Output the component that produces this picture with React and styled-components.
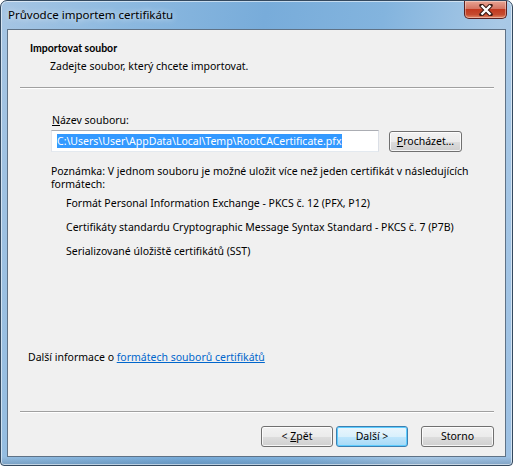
import React from 'react';
import styled, { createGlobalStyle } from 'styled-components';

const GlobalStyle = createGlobalStyle`
  html, body {
    margin: 0;
    padding: 0;
    background: #ffffff;
  }
  body {
    font-family: "Noto Sans", "Open Sans", sans-serif;
    font-size: 10.5px;
    color: #000;
  }
`;

// Aero glass frame
const Window = styled.div`
  width: 513px;
  height: 466px;
  box-sizing: border-box;
  display: flex;
  flex-direction: column;
  border: 1px solid #34495f;
  border-radius: 7px 7px 4px 4px;
  overflow: hidden;
  background:
    linear-gradient(to top, rgba(40, 70, 100, 0.25) 0px, rgba(40, 70, 100, 0) 8px),
    linear-gradient(
      100deg,
      #a6c5e3 0%,
      #8ebae0 20%,
      #78acda 45%,
      #83b4de 65%,
      #a9c9e6 85%,
      #9cc0e3 100%
    );
  box-shadow: inset 0 0 0 1px rgba(255, 255, 255, 0.55);
`;

const TitleBar = styled.div`
  height: 28px;
  display: flex;
  align-items: flex-start;
  justify-content: space-between;
  padding-left: 7px;
`;

const Caption = styled.span`
  margin-top: 6px;
  font-size: 11.5px;
  color: #000;
  text-shadow: 0 0 6px rgba(255, 255, 255, 0.9);
`;

const CloseButton = styled.div`
  width: 43px;
  height: 18px;
  margin-right: 5px;
  box-sizing: border-box;
  border: 1px solid #5a2020;
  border-top: none;
  border-radius: 0 0 5px 5px;
  background: linear-gradient(
    to bottom,
    #e8a493 0%,
    #d47563 45%,
    #c2391f 50%,
    #c54b2f 80%,
    #e48a6a 100%
  );
  box-shadow: inset 0 0 0 1px rgba(255, 255, 255, 0.35);
  display: flex;
  align-items: center;
  justify-content: center;
`;

const Client = styled.div`
  flex: 1;
  margin: 0 6px 8px 6px;
  border: 1px solid #5f7286;
  background: #f0f0f0;
  display: flex;
  flex-direction: column;
`;

const Header = styled.div`
  padding: 11px 0 0 22px;
  height: 46px;
`;

const HeaderTitle = styled.div`
  font-family: Lato, "Noto Sans", sans-serif;
  font-weight: bold;
  line-height: 15px;
`;

const HeaderText = styled.div`
  line-height: 15px;
  margin-top: 3px;
  padding-left: 20px;
`;

const Rule = styled.div`
  margin: 0 11px 0 12px;
  height: 0;
  border-top: 1px solid #a0a0a0;
  border-bottom: 1px solid #ffffff;
`;

const Body = styled.div`
  flex: 1;
  display: flex;
  flex-direction: column;
  padding: 24px 0 0 44px;
`;

const FieldLabel = styled.div`
  line-height: 15px;
`;

const FieldRow = styled.div`
  display: flex;
  align-items: center;
  margin-top: 2px;
  margin-left: -1px;
`;

const FileInput = styled.div`
  width: 328px;
  height: 22px;
  box-sizing: border-box;
  border: 1px solid #abadb3;
  border-left-color: #e2e3ea;
  border-right-color: #dbdfe6;
  border-bottom-color: #e3e9ef;
  background: #fff;
  display: flex;
  align-items: center;
  padding-left: 5px;
`;

const Selection = styled.span`
  background: #3399ff;
  color: #fff;
  line-height: 14px;
  padding-right: 1px;
  white-space: nowrap;
`;

const Button = styled.div`
  width: ${(p) => p.$w || 72}px;
  height: 21px;
  box-sizing: border-box;
  border: 1px solid ${(p) => (p.$default ? '#3c7fb1' : '#707070')};
  border-radius: 3px;
  background: ${(p) =>
    p.$default
      ? 'linear-gradient(to bottom, #eaf6fd 0%, #d9f0fc 50%, #bee6fd 51%, #a7d9f5 100%)'
      : 'linear-gradient(to bottom, #f2f2f2 0%, #ebebeb 50%, #dddddd 51%, #cfcfcf 100%)'};
  box-shadow: inset 0 0 0 1px ${(p) => (p.$default ? '#5ecdff' : 'rgba(255,255,255,0.8)')};
  display: flex;
  align-items: center;
  justify-content: center;
  line-height: 15px;
  white-space: pre;
  margin-left: ${(p) => p.$ml || 0}px;
`;

const Key = styled.span`
  text-decoration: underline;
`;

const Note = styled.div`
  margin-top: 13px;
  line-height: 13px;
  margin-left: -1px;
  white-space: nowrap;
`;

const FormatList = styled.div`
  display: flex;
  flex-direction: column;
  gap: 9px;
  margin-top: 5px;
  padding-left: 14px;
  line-height: 15px;
`;

const MoreInfo = styled.div`
  margin-top: auto;
  margin-left: -24px;
  margin-bottom: 46px;
  line-height: 15px;
`;

const Link = styled.a`
  color: #0066cc;
  text-decoration: underline;
`;

const Footer = styled.div`
  height: 43px;
  display: flex;
  align-items: flex-start;
  justify-content: flex-end;
  padding: 13px 11px 0 0;
  box-sizing: border-box;
`;

const CloseGlyph = () => (
  <svg width="14" height="12" viewBox="0 0 14 12">
    <path
      d="M2.5 1.5 L11.5 10.5 M11.5 1.5 L2.5 10.5"
      stroke="#3a1a14"
      strokeWidth="4.4"
      fill="none"
      strokeLinecap="round"
    />
    <path
      d="M2.5 1.5 L11.5 10.5 M11.5 1.5 L2.5 10.5"
      stroke="#ffffff"
      strokeWidth="2.4"
      fill="none"
    />
  </svg>
);

export default function App() {
  const formats = [
    'Formát Personal Information Exchange - PKCS č. 12 (PFX, P12)',
    'Certifikáty standardu Cryptographic Message Syntax Standard - PKCS č. 7 (P7B)',
    'Serializované úložiště certifikátů (SST)',
  ];

  return (
    <>
      <GlobalStyle />
      <Window>
        <TitleBar>
          <Caption>Průvodce importem certifikátu</Caption>
          <CloseButton>
            <CloseGlyph />
          </CloseButton>
        </TitleBar>
        <Client>
          <Header>
            <HeaderTitle>Importovat soubor</HeaderTitle>
            <HeaderText>Zadejte soubor, který chcete importovat.</HeaderText>
          </Header>
          <Rule />
          <Body>
            <FieldLabel>
              <Key>N</Key>ázev souboru:
            </FieldLabel>
            <FieldRow>
              <FileInput>
                <Selection>C:\Users\User\AppData\Local\Temp\RootCACertificate.pfx</Selection>
              </FileInput>
              <Button $w={73} $ml={10}>
                <Key>P</Key>rocházet...
              </Button>
            </FieldRow>
            <Note>
              Poznámka: V jednom souboru je možné uložit více než jeden certifikát v následujících
              <br />
              formátech:
            </Note>
            <FormatList>
              {formats.map((f) => (
                <div key={f}>{f}</div>
              ))}
            </FormatList>
            <MoreInfo>
              Další informace o <Link>formátech souborů certifikátů</Link>
            </MoreInfo>
          </Body>
          <Rule />
          <Footer>
            <Button>
              {'< '}
              <Key>Z</Key>pět
            </Button>
            <Button $default $ml={3}>
              Další &gt;
            </Button>
            <Button $w={73} $ml={13}>
              Storno
            </Button>
          </Footer>
        </Client>
      </Window>
    </>
  );
}
